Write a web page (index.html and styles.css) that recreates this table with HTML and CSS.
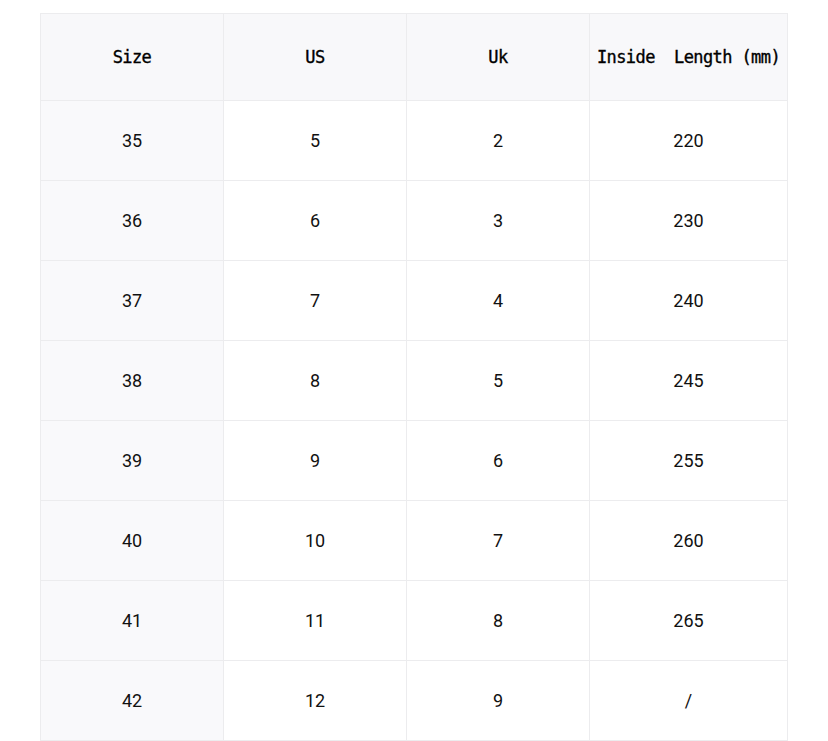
FILE: index.html
```html
<!DOCTYPE html>
<html>
<head>
<meta charset="utf-8">
<link rel="stylesheet" href="styles.css">
</head>
<body>
<div class="page">
<table class="size-table">
  <colgroup>
    <col class="c1"><col class="c2"><col class="c3"><col class="c4">
  </colgroup>
  <thead>
    <tr><th>Size</th><th>US</th><th>Uk</th><th>Inside  Length (mm)</th></tr>
  </thead>
  <tbody>
    <tr><td>35</td><td>5</td><td>2</td><td>220</td></tr>
    <tr><td>36</td><td>6</td><td>3</td><td>230</td></tr>
    <tr><td>37</td><td>7</td><td>4</td><td>240</td></tr>
    <tr><td>38</td><td>8</td><td>5</td><td>245</td></tr>
    <tr><td>39</td><td>9</td><td>6</td><td>255</td></tr>
    <tr><td>40</td><td>10</td><td>7</td><td>260</td></tr>
    <tr><td>41</td><td>11</td><td>8</td><td>265</td></tr>
    <tr><td>42</td><td>12</td><td>9</td><td>/</td></tr>
  </tbody>
</table>
</div>
</body>
</html>
```
FILE: styles.css
```css
html, body {
  margin: 0;
  padding: 0;
  background: #ffffff;
}
.page {
  padding: 13px 0 0 40px;
}
.size-table {
  border-collapse: collapse;
  table-layout: fixed;
  width: 748px;
  color: #111;
}
.c1, .c2, .c3 { width: 183px; }
.c4 { width: 198px; }
.size-table th, .size-table td {
  border: 1px solid #ececee;
  text-align: center;
  vertical-align: middle;
  padding: 0;
}
.size-table th {
  height: 86px;
  background: #f8f8fa;
  font-family: "DejaVu Sans Mono", "Liberation Mono", monospace;
  font-size: 17px;
  letter-spacing: -0.6px;
  font-weight: normal;
  -webkit-text-stroke: 0.35px #000;
  white-space: pre;
  color: #000;
}
.size-table td {
  height: 79px;
  font-family: Roboto, "Liberation Sans", sans-serif;
  font-size: 18px;
}
.size-table td:first-child {
  background: #f9f9fb;
}
```
